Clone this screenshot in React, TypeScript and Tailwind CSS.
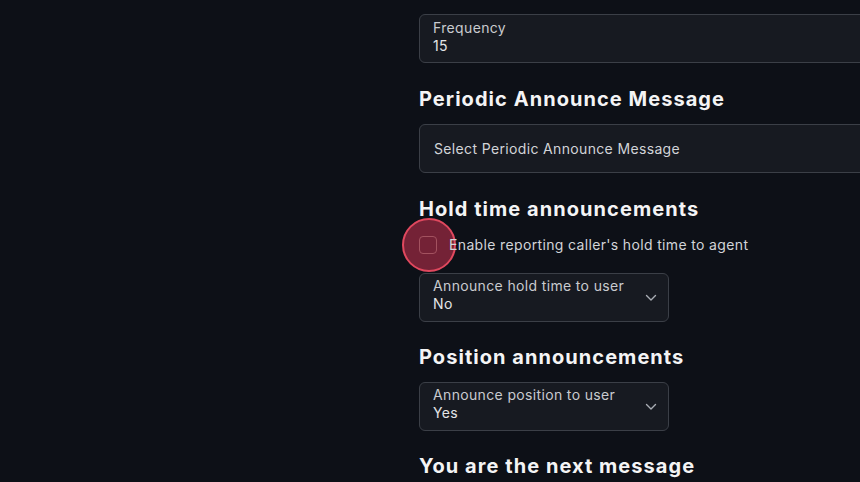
import React from "react";

const font = { fontFamily: "Inter, 'Noto Sans', sans-serif" };

function Chevron() {
  return (
    <svg width="12" height="8" viewBox="0 0 12 8" fill="none" className="shrink-0">
      <path d="M1.5 1.5 L6 6 L10.5 1.5" stroke="#a9adb4" strokeWidth="1.4" strokeLinecap="round" strokeLinejoin="round" />
    </svg>
  );
}

function Heading({ children, className = "" }: { children: React.ReactNode; className?: string }) {
  return (
    <h2 className={`text-[20px] leading-[28px] font-bold text-[#f4f4f5] tracking-[1.05px] ${className}`}>{children}</h2>
  );
}

function Dropdown({ label, value, className = "" }: { label: string; value: string; className?: string }) {
  return (
    <div className={`w-[250px] h-[49px] rounded-[6px] border border-[#3b3f47] bg-[#171a21] flex items-center pl-[13px] pr-[11px] ${className}`}>
      <div className="flex-1 flex flex-col self-start pt-[3px]">
        <span className="text-[14px] leading-[18px] text-[#c9cbcf] tracking-[0.35px]">{label}</span>
        <span className="text-[14px] leading-[18px] text-[#e4e5e7] tracking-[0.35px]">{value}</span>
      </div>
      <Chevron />
    </div>
  );
}

export default function App() {
  return (
    <div className="w-[860px] h-[482px] overflow-hidden bg-[#0d1017] flex" style={font}>
      <div className="w-[419px] shrink-0" />
      <div className="w-[700px] shrink-0 flex flex-col pt-[14px]">
        <div className="h-[49px] rounded-[6px] border border-[#3b3f47] bg-[#171a21] flex flex-col pt-[4px] pl-[13px]">
          <span className="text-[14px] leading-[18px] text-[#c9cbcf] tracking-[0.35px]">Frequency</span>
          <span className="text-[14px] leading-[18px] text-[#e4e5e7] tracking-[0.35px]">15</span>
        </div>

        <Heading className="mt-[22px]">Periodic Announce Message</Heading>
        <div className="mt-[11px] h-[49px] rounded-[6px] border border-[#3b3f47] bg-[#171a21] flex items-center pl-[14px]">
          <span className="text-[14px] leading-[18px] text-[#d2d4d8] tracking-[0.35px]">Select Periodic Announce Message</span>
        </div>

        <Heading className="mt-[22px]">Hold time announcements</Heading>
        <div className="mt-[10px] h-[24px] flex items-center relative">
          <div className="absolute left-[-17px] top-[-15px] w-[54px] h-[54px] rounded-full bg-[#80253a]/90 border-2 border-[#e0485e]" />
          <div className="relative w-[18px] h-[18px] rounded-[4px] border border-[#a3525f] bg-transparent" />
          <span className="relative ml-[12px] text-[14px] leading-[18px] text-[#d2d4d8] tracking-[0.35px]">
            Enable reporting caller's hold time to agent
          </span>
        </div>
        <Dropdown className="mt-[16px]" label="Announce hold time to user" value="No" />

        <Heading className="mt-[21px]">Position announcements</Heading>
        <Dropdown className="mt-[11px]" label="Announce position to user" value="Yes" />

        <Heading className="mt-[21px]">You are the next message</Heading>
      </div>
    </div>
  );
}
